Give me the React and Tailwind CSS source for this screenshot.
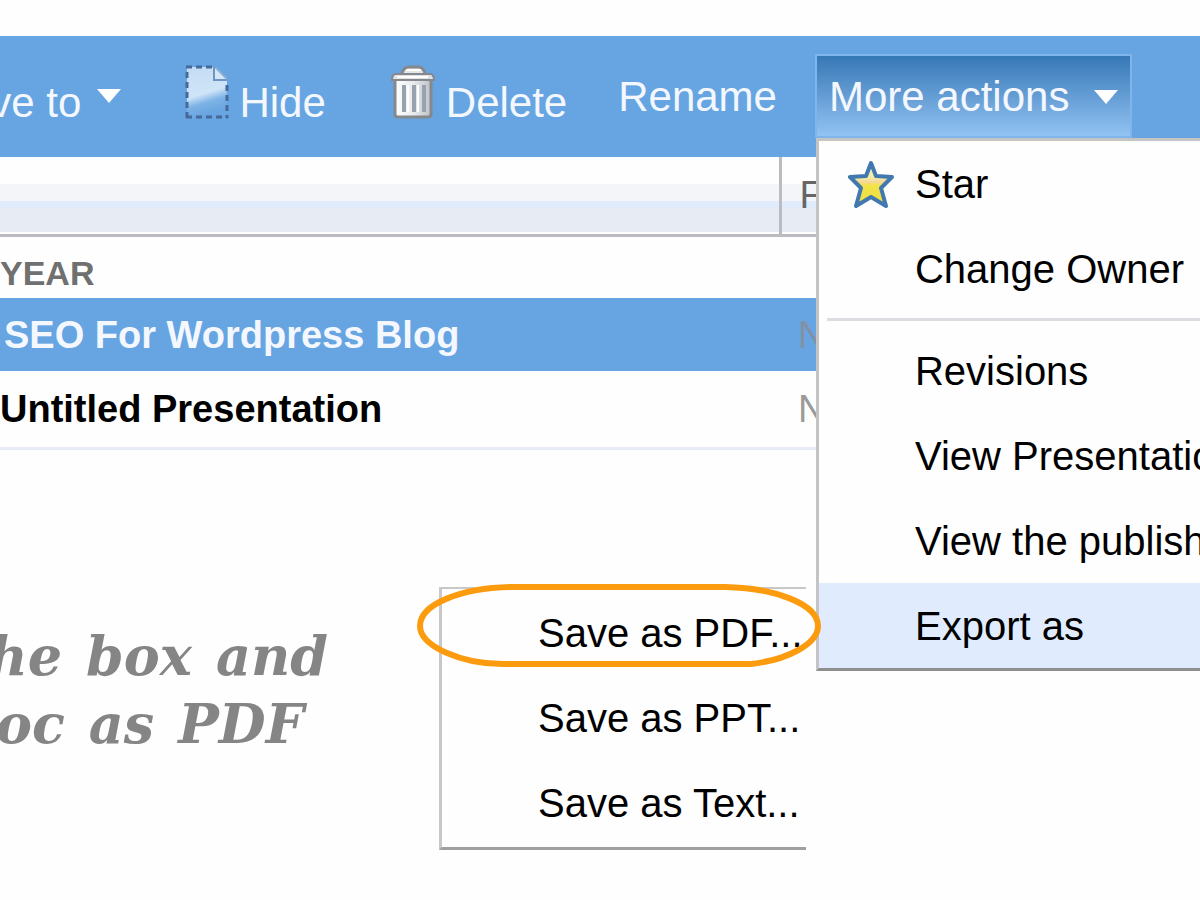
import React from 'react';

function Caret() {
  return (
    <svg className="h-[14px] w-[24px] shrink-0" viewBox="0 0 24 14" aria-hidden="true">
      <path d="M0 0H24L12 14Z" fill="#fff" />
    </svg>
  );
}

function HideIcon() {
  return (
    <svg className="h-[54px] w-[44px] shrink-0" viewBox="0 0 44 54" aria-hidden="true">
      <defs>
        <linearGradient id="page" x1="0" y1="0" x2="0.25" y2="1">
          <stop offset="0" stopColor="#c3dcf4" />
          <stop offset="0.6" stopColor="#cfe4f7" />
          <stop offset="0.78" stopColor="#7db3e6" />
          <stop offset="1" stopColor="#69a5e0" />
        </linearGradient>
      </defs>
      <path d="M2 2H29L42 15V52H2Z" fill="url(#page)" />
      <path d="M29 2V15H42Z" fill="#d5e6f7" />
      <path d="M29 2V15H42" fill="none" stroke="#6f95c4" strokeWidth="2" />
      <path d="M31 3L42 14" stroke="#8fb0d6" strokeWidth="2" />
      <path d="M1 2H31M2 7V53M42 20V53M1 52H43" fill="none" stroke="#46699c" strokeWidth="3" strokeDasharray="6 4" />
    </svg>
  );
}

function TrashIcon() {
  return (
    <svg className="h-[54px] w-[46px] shrink-0" viewBox="0 0 46 54" aria-hidden="true">
      <defs>
        <linearGradient id="can" x1="0" y1="0" x2="1" y2="0">
          <stop offset="0" stopColor="#fff" />
          <stop offset="0.5" stopColor="#e9ebee" />
          <stop offset="1" stopColor="#bfc2c6" />
        </linearGradient>
      </defs>
      <path d="M5 14H41V49Q41 52 38 52H8Q5 52 5 49Z" fill="url(#can)" stroke="#85888c" strokeWidth="3" />
      <path d="M12 8Q14 2 19 2H28Q33 2 35 8" fill="#e4e6e8" stroke="#85888c" strokeWidth="3" />
      <path d="M5 9H41Q44 10 44 15H2Q2 10 5 9Z" fill="#dfe1e4" stroke="#85888c" strokeWidth="2" />
      <path d="M7 12H38M16 5H31" stroke="#fff" strokeWidth="2" />
      <path d="M14 20V47M24 20V47M34 20V47" stroke="#98a1ae" strokeWidth="4" />
      <path d="M18 20V47M28 20V47" stroke="#fff" strokeWidth="2" />
    </svg>
  );
}

function StarIcon() {
  return (
    <svg className="h-[48px] w-[48px]" viewBox="0 0 48 48" aria-hidden="true">
      <defs>
        <linearGradient id="gold" x1="0" y1="0" x2="0" y2="1">
          <stop offset="0" stopColor="#f3f0d0" />
          <stop offset="0.36" stopColor="#f4eaa0" />
          <stop offset="0.44" stopColor="#f5d79a" />
          <stop offset="0.52" stopColor="#f1e348" />
          <stop offset="1" stopColor="#eee040" />
        </linearGradient>
      </defs>
      <path
        d="M24 3L29 16L45 17L34 28L39 46L24 37L9 46L14 28L3 17L19 16Z"
        fill="url(#gold)"
        stroke="#4178b0"
        strokeWidth="4"
        strokeLinejoin="round"
      />
    </svg>
  );
}

function MenuItem({ children, icon, active }) {
  return (
    <button
      type="button"
      role="menuitem"
      className={
        active
          ? 'flex h-[85px] w-full items-center bg-[#e0ecfd] text-left whitespace-nowrap'
          : 'flex h-[85px] w-full items-center text-left whitespace-nowrap'
      }
    >
      <span className="flex w-24 shrink-0 justify-center pl-2">{icon}</span>
      {children}
    </button>
  );
}

function ExportMenu() {
  return (
    <div className="absolute top-1 -left-[380px] w-[367px]">
      <div
        role="menu"
        aria-label="Export as"
        className="border-t-2 border-b-3 border-l-3 border-[#c8c8c8] border-b-[#a0a0a0] bg-[#fefefe] pt-px pb-0.5"
      >
        {['Save as PDF...', 'Save as PPT...', 'Save as Text...'].map((label) => (
          <MenuItem key={label}>{label}</MenuItem>
        ))}
      </div>
      <svg className="pointer-events-none absolute -top-[3px] -left-[22px] h-[86px] w-[404px]" viewBox="0 0 404 86" aria-hidden="true">
        <path
          d="M94 3H308C358 4 401 20 401 42C401 60 370 76 334 80H86C44 80 3 62 3 42C3 20 44 4 94 3Z"
          fill="none"
          stroke="#fd9b0f"
          strokeWidth="6"
        />
      </svg>
    </div>
  );
}

function ActionsMenu() {
  return (
    <div
      role="menu"
      aria-label="More actions"
      className="absolute top-[84px] left-px z-10 w-[560px] border-3 border-[#c4c4c4] border-b-[#8f8f8f] bg-[#fefefe] text-[40px] leading-[48px] text-black"
    >
      <MenuItem icon={<StarIcon />}>Star</MenuItem>
      <MenuItem>Change Owner</MenuItem>
      <hr className="my-[7px] ml-2 border-t-3 border-[#dcdde0]" />
      <MenuItem>Revisions</MenuItem>
      <MenuItem>View Presentation</MenuItem>
      <MenuItem>View the published</MenuItem>
      <div className="relative">
        <MenuItem active>Export as</MenuItem>
        <ExportMenu />
      </div>
    </div>
  );
}

function Toolbar() {
  return (
    <div className="flex h-[121px] items-start bg-[#66a5e2] text-[42px] leading-[48px] whitespace-nowrap text-[#f4f8fe]">
      <div className="flex shrink-0 gap-16 pt-[29px]">
        <button type="button" className="-ml-[68px] flex items-start gap-4">
          <span className="pt-[14px]">Move to</span>
          <span className="pt-6">
            <Caret />
          </span>
        </button>
        <button type="button" className="flex items-start gap-[10px]">
          <HideIcon />
          <span className="pt-[14px]">Hide</span>
        </button>
        <button type="button" className="flex items-start gap-[10px]">
          <TrashIcon />
          <span className="pt-[14px]">Delete</span>
        </button>
      </div>
      <button type="button" className="ml-[51px] shrink-0 pt-[37px]">
        Rename
      </button>
      <div className="relative ml-[38px] shrink-0 pt-[18px]">
        <button
          type="button"
          aria-haspopup="menu"
          aria-expanded="true"
          className="flex h-[84px] w-[317px] items-center justify-between border-2 border-[#80b5eb] bg-linear-to-b from-[#3578b6] to-[#92c3f3] px-3 pt-0.5"
        >
          More actions
          <Caret />
        </button>
        <div className="absolute top-[18px] left-0">
          <ActionsMenu />
        </div>
      </div>
    </div>
  );
}

function DocumentTable() {
  return (
    <table className="w-full table-fixed border-collapse text-left text-[38px] leading-[44px] whitespace-nowrap">
      <colgroup>
        <col className="w-[65%]" />
        <col />
      </colgroup>
      <thead>
        <tr className="h-[78px] border-b-3 border-[#bbbcc0] bg-[linear-gradient(to_bottom,#fefefe_0_27px,#f3f5f9_27px_44px,#e0ebfb_44px_51px,#e7ebf3_51px)]">
          <th className="border-r-3 border-[#bbbcc0]" aria-label="Name" />
          <th className="pl-[18px] font-normal text-[#666]">F</th>
        </tr>
      </thead>
      <tbody>
        <tr className="h-[63px]">
          <th colSpan={2} className="pt-3 text-[34px] text-[#707070]">
            YEAR
          </th>
        </tr>
        <tr className="h-[73px] bg-[#66a5e2]">
          <td className="pl-1 font-bold text-[#f4f8fe]">SEO For Wordpress Blog</td>
          <td className="pl-[18px] text-[#8291a5]">N</td>
        </tr>
        <tr className="h-[77px] border-b-3 border-[#e6ebf5]">
          <td className="font-bold text-black">Untitled Presentation</td>
          <td className="pl-[18px] text-[#9a9a9a]">N</td>
        </tr>
      </tbody>
    </table>
  );
}

function Note({ text }) {
  return (
    <p className="flex gap-6">
      {text.split(' ').map((word) => (
        <span key={word}>{word} </span>
      ))}
    </p>
  );
}

export default function App() {
  return (
    <main className="min-h-screen overflow-hidden bg-[#fefefe] pt-9 font-['Liberation_Sans',Arial,sans-serif]">
      <Toolbar />
      <DocumentTable />
      <div className="mt-[172px] flex w-[328px] flex-col items-end font-['DejaVu_Serif',serif] text-[54px] leading-[68px] font-bold whitespace-nowrap text-[#858585] italic">
        <Note text="the box and" />
        <div className="pr-6">
          <Note text="doc as PDF" />
        </div>
      </div>
    </main>
  );
}
